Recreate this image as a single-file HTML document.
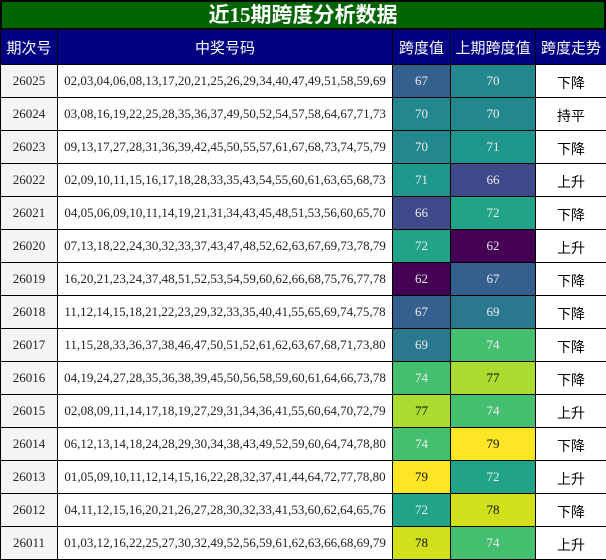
<!DOCTYPE html>
<html><head><meta charset="utf-8"><style>
*{margin:0;padding:0;box-sizing:border-box}
body{width:606px;height:560px;overflow:hidden;background:#fff;font-family:"Liberation Serif","Noto Sans CJK SC",serif}
.title{height:29px;background:#006400;border:2px solid #000;border-bottom:1px solid #000;color:#fff;font:bold 21px "Liberation Serif","Noto Sans CJK SC",sans-serif;text-align:center;line-height:26px}
table{border-collapse:collapse;width:606px;table-layout:fixed}
td,th{border:1px solid #000;text-align:center;font-size:13px;height:33px;padding:0}
th{background:#000080;color:#fff;font-weight:normal;font-family:"Liberation Sans","Noto Sans CJK SC",sans-serif;font-size:15px;height:35px;border-color:#000}
td.a{background:#f5f5f5;color:#222}
td.b{background:#fff;color:#222;letter-spacing:0px}
td.t{font-family:"Liberation Sans","Noto Sans CJK SC",sans-serif;font-size:14px;padding-top:4px}
td.v{color:#eee}
td.d{color:#111}
</style></head><body>
<div class="title">近15期跨度分析数据</div>
<table>
<colgroup><col style="width:57px"><col style="width:335px"><col style="width:58px"><col style="width:85px"><col style="width:71px"></colgroup>
<tr><th>期次号</th><th>中奖号码</th><th>跨度值</th><th>上期跨度值</th><th>跨度走势</th></tr>
<tr><td class="a">26025</td><td class="b">02,03,04,06,08,13,17,20,21,25,26,29,34,40,47,49,51,58,59,69</td><td class="v" style="background:#355f8d">67</td><td class="v" style="background:#23888e">70</td><td class="t">下降</td></tr>
<tr><td class="a">26024</td><td class="b">03,08,16,19,22,25,28,35,36,37,49,50,52,54,57,58,64,67,71,73</td><td class="v" style="background:#23888e">70</td><td class="v" style="background:#23888e">70</td><td class="t">持平</td></tr>
<tr><td class="a">26023</td><td class="b">09,13,17,27,28,31,36,39,42,45,50,55,57,61,67,68,73,74,75,79</td><td class="v" style="background:#23888e">70</td><td class="v" style="background:#1f968b">71</td><td class="t">下降</td></tr>
<tr><td class="a">26022</td><td class="b">02,09,10,11,15,16,17,18,28,33,35,43,54,55,60,61,63,65,68,73</td><td class="v" style="background:#1f968b">71</td><td class="v" style="background:#3e4a89">66</td><td class="t">上升</td></tr>
<tr><td class="a">26021</td><td class="b">04,05,06,09,10,11,14,19,21,31,34,43,45,48,51,53,56,60,65,70</td><td class="v" style="background:#3e4a89">66</td><td class="v" style="background:#20a386">72</td><td class="t">下降</td></tr>
<tr><td class="a">26020</td><td class="b">07,13,18,22,24,30,32,33,37,43,47,48,52,62,63,67,69,73,78,79</td><td class="v" style="background:#20a386">72</td><td class="v" style="background:#440154">62</td><td class="t">上升</td></tr>
<tr><td class="a">26019</td><td class="b">16,20,21,23,24,37,48,51,52,53,54,59,60,62,66,68,75,76,77,78</td><td class="v" style="background:#440154">62</td><td class="v" style="background:#355f8d">67</td><td class="t">下降</td></tr>
<tr><td class="a">26018</td><td class="b">11,12,14,15,18,21,22,23,29,32,33,35,40,41,55,65,69,74,75,78</td><td class="v" style="background:#355f8d">67</td><td class="v" style="background:#2a788e">69</td><td class="t">下降</td></tr>
<tr><td class="a">26017</td><td class="b">11,15,28,33,36,37,38,46,47,50,51,52,61,62,63,67,68,71,73,80</td><td class="v" style="background:#2a788e">69</td><td class="v" style="background:#44bf70">74</td><td class="t">下降</td></tr>
<tr><td class="a">26016</td><td class="b">04,19,24,27,28,35,36,38,39,45,50,56,58,59,60,61,64,66,73,78</td><td class="v" style="background:#44bf70">74</td><td class="d" style="background:#addc30">77</td><td class="t">下降</td></tr>
<tr><td class="a">26015</td><td class="b">02,08,09,11,14,17,18,19,27,29,31,34,36,41,55,60,64,70,72,79</td><td class="d" style="background:#addc30">77</td><td class="v" style="background:#44bf70">74</td><td class="t">上升</td></tr>
<tr><td class="a">26014</td><td class="b">06,12,13,14,18,24,28,29,30,34,38,43,49,52,59,60,64,74,78,80</td><td class="v" style="background:#44bf70">74</td><td class="d" style="background:#fde725">79</td><td class="t">下降</td></tr>
<tr><td class="a">26013</td><td class="b">01,05,09,10,11,12,14,15,16,22,28,32,37,41,44,64,72,77,78,80</td><td class="d" style="background:#fde725">79</td><td class="v" style="background:#20a386">72</td><td class="t">上升</td></tr>
<tr><td class="a">26012</td><td class="b">04,11,12,15,16,20,21,26,27,28,30,32,33,41,53,60,62,64,65,76</td><td class="v" style="background:#20a386">72</td><td class="d" style="background:#d0e11c">78</td><td class="t">下降</td></tr>
<tr><td class="a">26011</td><td class="b">01,03,12,16,22,25,27,30,32,49,52,56,59,61,62,63,66,68,69,79</td><td class="d" style="background:#d0e11c">78</td><td class="v" style="background:#44bf70">74</td><td class="t">上升</td></tr>
</table>
</body></html>
